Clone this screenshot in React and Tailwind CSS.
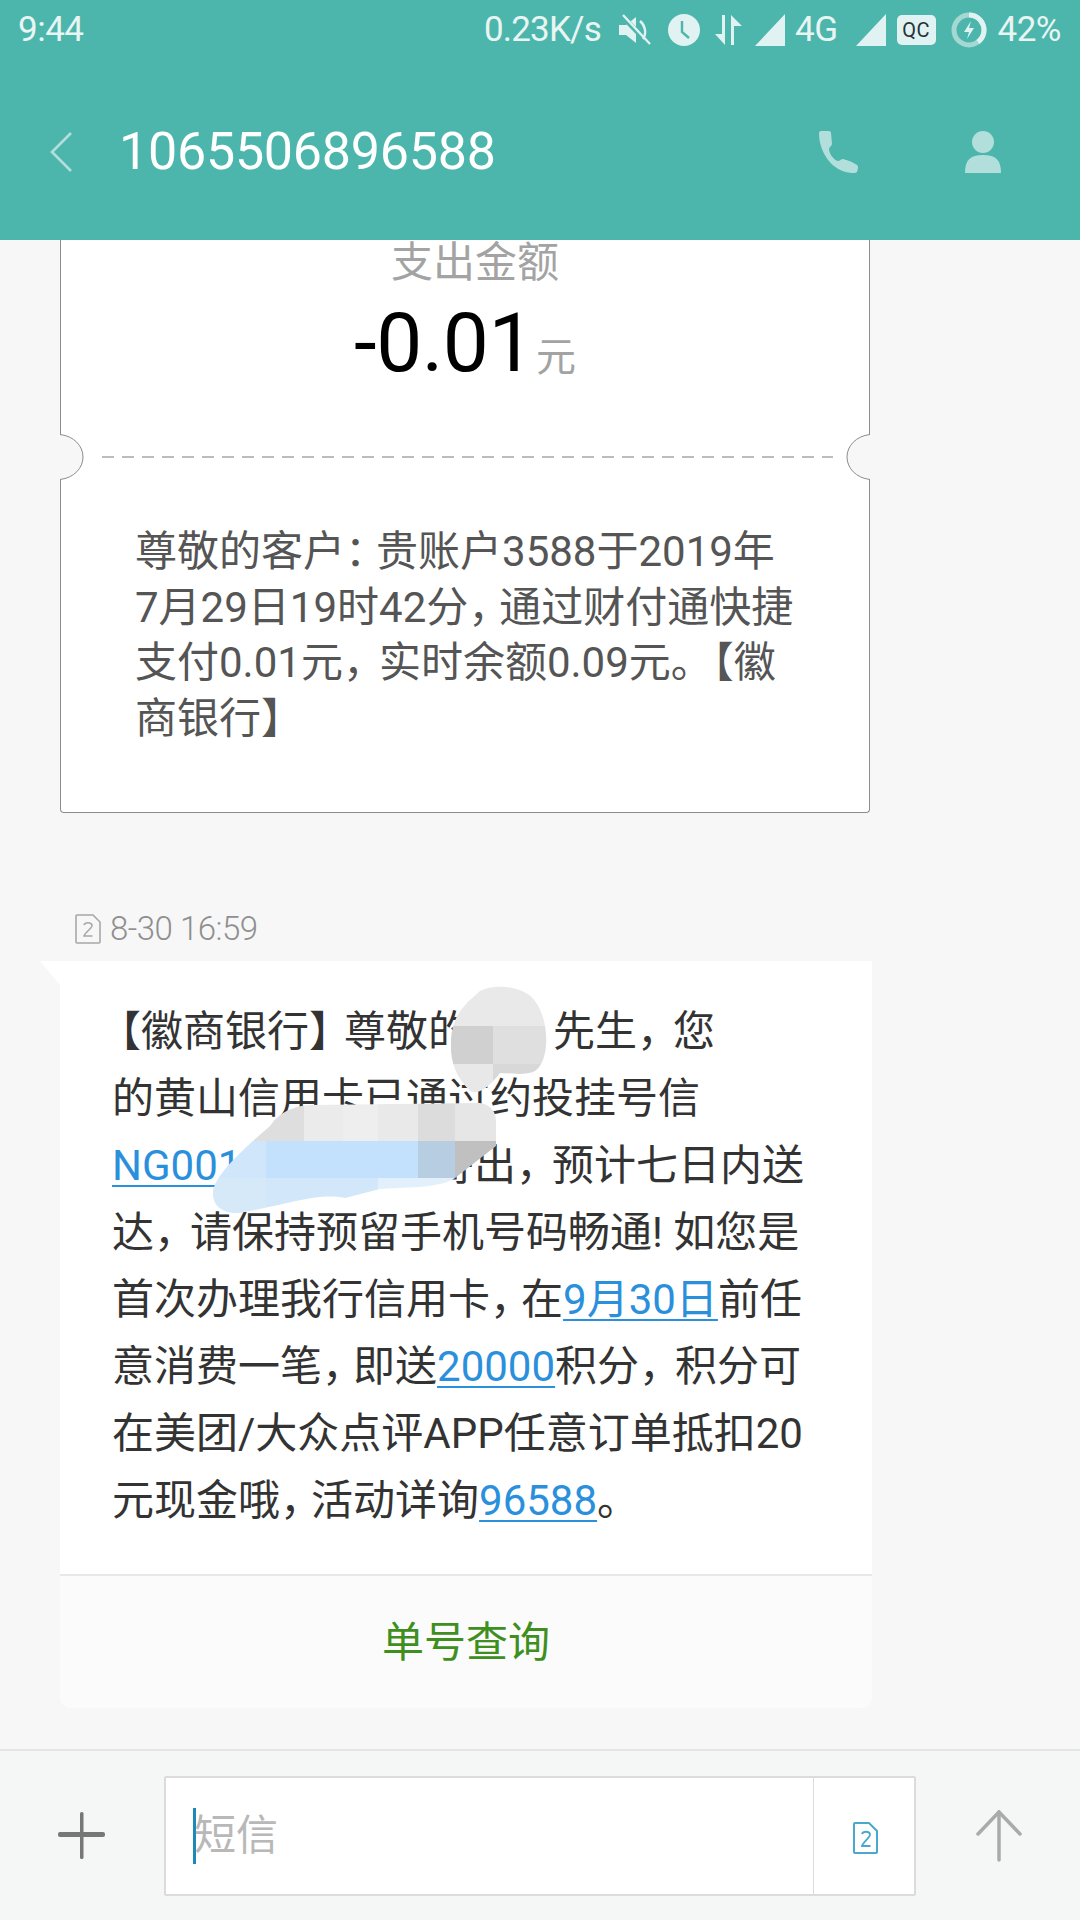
const smudgeCells = [
  // upper smudge
  { x: 445, y: 985, w: 110, h: 40, fill: '#e9e9e9', clip: 'a' },
  { x: 445, y: 1025, w: 48, h: 38, fill: '#d0d0d0', clip: 'a' },
  { x: 493, y: 1025, w: 62, h: 38, fill: '#dfdfdf', clip: 'a' },
  { x: 445, y: 1063, w: 48, h: 35, fill: '#e8e8e8', clip: 'a' },
  { x: 493, y: 1063, w: 62, h: 35, fill: '#d8d8d8', clip: 'a' },
  // lower smudge, grey row
  { x: 205, y: 1100, w: 99, h: 40, fill: '#dedede', clip: 'b' },
  { x: 304, y: 1100, w: 39, h: 40, fill: '#ebebeb', clip: 'b' },
  { x: 343, y: 1100, w: 35, h: 40, fill: '#eeeeee', clip: 'b' },
  { x: 378, y: 1100, w: 40, h: 40, fill: '#e9e9e9', clip: 'b' },
  { x: 418, y: 1100, w: 37, h: 40, fill: '#dcdcdc', clip: 'b' },
  { x: 455, y: 1100, w: 45, h: 40, fill: '#e6e6e6', clip: 'b' },
  // lower smudge, blue rows
  { x: 205, y: 1140, w: 61, h: 37, fill: '#cfe6fb', clip: 'b' },
  { x: 266, y: 1140, w: 152, h: 37, fill: '#c3e1fc', clip: 'b' },
  { x: 418, y: 1140, w: 37, h: 37, fill: '#b7cde2', clip: 'b' },
  { x: 455, y: 1140, w: 45, h: 37, fill: '#c0c0c0', clip: 'b' },
  { x: 205, y: 1177, w: 61, h: 38, fill: '#d6e9f9', clip: 'b' },
  { x: 266, y: 1177, w: 112, h: 38, fill: '#d2e7fa', clip: 'b' },
  { x: 378, y: 1177, w: 90, h: 38, fill: '#e2f0fb', clip: 'b' },
]

function Signal() {
  return (
    <svg width="30" height="32" viewBox="0 0 30 32" fill="#e0f2f1">
      <path d="M30 0V32H0Z" />
    </svg>
  )
}

function StatusBar() {
  return (
    <div className="flex h-[60px] items-center justify-between pl-[18px] pr-[19px] text-[35px] font-normal text-[#e8f5f3]">
      <span className="tracking-[-0.5px]">9:44</span>
      <div className="flex items-center">
        <span className="tracking-[-0.8px]">0.23K/s</span>
        {/* mute */}
        <svg className="ml-[18px]" width="32" height="32" viewBox="0 0 32 32" fill="#e0f2f1">
          <path d="M0 11h7l10-8v26l-10-8H0Z" />
          <path d="M3 2l27 28" stroke="#4db6ac" strokeWidth="5" />
          <path d="M4 1l27 29" stroke="#e0f2f1" strokeWidth="2.4" />
          <path d="M21 7c5 4 7 12 3 18" stroke="#e0f2f1" strokeWidth="2.4" fill="none" />
        </svg>
        {/* alarm */}
        <svg className="ml-[17px]" width="32" height="32" viewBox="0 0 32 32">
          <circle cx="16" cy="16" r="16" fill="#e0f2f1" />
          <path d="M14 7v11l7 6" fill="none" stroke="#4db6ac" strokeWidth="2.4" />
        </svg>
        {/* data arrows */}
        <svg className="ml-[14px]" width="28" height="30" viewBox="0 0 28 30" fill="#e0f2f1">
          <path d="M8 0h3v30L1 19h7Z" />
          <path d="M17 0l11 11h-8v19h-3Z" />
        </svg>
        <span className="ml-[13px]"><Signal /></span>
        <span className="ml-[10px] tracking-[-0.5px]">4G</span>
        <span className="ml-[18px]"><Signal /></span>
        <span className="ml-[11px] flex h-[30px] w-[39px] items-center justify-center rounded-[5px] bg-[#e0f2f1] text-[20px] font-normal tracking-[0.5px] text-[#263238]">
          QC
        </span>
        {/* battery ring */}
        <svg className="ml-[15px]" width="36" height="36" viewBox="0 0 36 36">
          <circle cx="18" cy="18" r="15" fill="none" stroke="#a6d8d3" strokeWidth="5" />
          <path d="M18 3a15 15 0 0 1 9 27" fill="none" stroke="#e0f2f1" strokeWidth="5" />
          <path d="M20 9l-7 11h5l-2 7 7-11h-5Z" fill="#e0f2f1" />
        </svg>
        <span className="ml-[11px] tracking-[-0.5px]">42%</span>
      </div>
    </div>
  )
}

function NavBar() {
  return (
    <div className="flex h-[180px] items-center pt-[4px]">
      <svg className="ml-[50px]" width="22" height="40" viewBox="0 0 22 40" fill="none" stroke="#b2dfdb" strokeWidth="2.6">
        <path d="M21 1L2 20l19 19" />
      </svg>
      <h1 className="ml-[47px] text-[52px] font-normal leading-none tracking-[-0.25px] text-white">1065506896588</h1>
      <svg className="ml-auto" width="42" height="42" viewBox="0 0 42 42" fill="#b2dfdb">
        <path d="M3 0h8c1.500 0 2 1 2 2l1 11c0 2-3 3-3 5 0 5 5 11 9 12 2 0 3-2 5-2 4 1 10 3 14 6 1 1 1 2 1 3l-1 4c-1 1-3 1-5 1C14 41 1 21 1 2c0-1 1-2 2-2Z" />
      </svg>
      <svg className="ml-[104px] mr-[78px]" width="38" height="42" viewBox="0 0 38 42" fill="#b2dfdb">
        <ellipse cx="19" cy="11" rx="11" ry="11" />
        <path d="M1 42c0-13 5-18 18-18s18 5 18 18Z" />
      </svg>
    </div>
  )
}

function Notch({ right }) {
  return (
    <svg
      className={right ? 'absolute right-[-1px] top-[194px] h-[46px] w-[24px] -scale-x-100' : 'absolute left-[-1px] top-[194px] h-[46px] w-[24px]'}
      viewBox="0 0 24 46"
    >
      <path d="M0 0.5C14 2 23 12 23 23S14 44 0 45.5Z" fill="#f7f7f7" />
      <path d="M0 0.5C14 2 23 12 23 23S14 44 0 45.5" fill="none" stroke="#8c8c8c" strokeWidth="1" />
    </svg>
  )
}

// the phone's font sets these marks narrower than a full em
function Mark({ children, loose }) {
  return <span className={loose ? 'tracking-[-6px]' : 'tracking-[-11px]'}>{children}</span>
}

function ReceiptCard() {
  return (
    <div className="relative ml-[60px] h-[573px] w-[810px] rounded-b-[4px] border border-t-0 border-[#8c8c8c] bg-white">
      <p className="pl-[20px] text-center text-[42px] leading-[46px] text-[#a3a3a3]">支出金额</p>
      <div className="mt-[12px] flex h-[90px] items-baseline justify-center">
        <span className="text-[82px] font-normal leading-[90px] tracking-[-0.5px] text-black">-0.01</span>
        <span className="ml-[2px] text-[40px] text-[#a3a3a3]">元</span>
      </div>
      <Notch />
      <Notch right />
      <div className="ml-[41px] mr-[36px] mt-[68px] h-[2px] bg-[repeating-linear-gradient(90deg,#bdbdbd_0,#bdbdbd_12px,transparent_12px,transparent_20px)]" />
      <div className="ml-[74px] mt-[66px] whitespace-nowrap text-[42px] leading-[55.5px] text-[#555]">
        <p>尊敬的客户<Mark>：</Mark>贵账户3588于2019年</p>
        <p>7月29日19时42分<Mark>，</Mark>通过财付通快捷</p>
        <p>支付0.01元<Mark loose>，</Mark>实时余额0.09元。【徽</p>
        <p>商银行】</p>
      </div>
    </div>
  )
}

function Link({ children }) {
  return <span className="text-[#2a90dc] underline decoration-2 underline-offset-[5px]">{children}</span>
}

function MessageBubble() {
  return (
    <div className="relative ml-[60px] mt-[14px] w-[812px] rounded-b-[12px] bg-white">
      <svg className="absolute left-[-20px] top-0" width="20" height="24" viewBox="0 0 20 24" fill="#fff">
        <path d="M0 0H20V24Z" />
      </svg>
      <div className="whitespace-nowrap pb-[40px] pl-[52px] pt-[37px] text-[42px] leading-[67px] text-[#333]">
        <p className="-ml-[13px]">【徽商银行<span className="tracking-[-7px]">】</span>尊敬的<span className="inline-block w-[83px]" />先生<Mark loose>，</Mark>您</p>
        <p>的黄山信用卡已通过约投挂号信</p>
        <p className="flex w-[692px] justify-between">
          <Link>NG001</Link>
          <span>寄出<Mark loose>，</Mark>预计七日内送</span>
        </p>
        <p>达<Mark loose>，</Mark>请保持预留手机号码畅通! 如您是</p>
        <p>首次办理我行信用卡<Mark>，</Mark>在<Link>9月30日</Link>前任</p>
        <p>意消费一笔<Mark>，</Mark>即送<Link>20000</Link>积分<Mark loose>，</Mark>积分可</p>
        <p>在美团/大众点评APP任意订单抵扣20</p>
        <p>元现金哦<Mark>，</Mark>活动详询<Link>96588</Link>。</p>
      </div>
      <div className="flex h-[134px] items-center justify-center rounded-b-[12px] border-t-2 border-[#e8e8e8] bg-[#fbfbfb] text-[42px] text-[#3f8f1f]">
        单号查询
      </div>
      {/* mosaic hiding the private details */}
      <svg className="absolute left-0 top-0" width="560" height="270" viewBox="60 960 560 270">
        <defs>
          <clipPath id="a">
            <path d="M451 1040C452 1010 470 1000 480 990C495 982 525 985 535 1000C550 1020 550 1060 535 1070C525 1075 510 1072 500 1072C490 1085 478 1095 470 1090C455 1075 450 1060 451 1040Z" />
          </clipPath>
          <clipPath id="b">
            <path d="M270 1125C280 1110 295 1105 310 1104L480 1102C492 1104 496 1112 496 1120V1145L455 1177C440 1188 400 1186 380 1188L345 1197C320 1192 300 1200 240 1212C222 1213 212 1205 213 1190C216 1175 235 1155 270 1125Z" />
          </clipPath>
        </defs>
        {smudgeCells.map((c) => (
          <rect key={`${c.x}-${c.y}`} x={c.x} y={c.y} width={c.w} height={c.h} fill={c.fill} clipPath={`url(#${c.clip})`} />
        ))}
      </svg>
    </div>
  )
}

function Composer() {
  return (
    <div className="flex h-[171px] items-center border-t-2 border-[#e4e6e6] bg-[#f5f7f7]">
      <svg className="ml-[58px]" width="47" height="47" viewBox="0 0 47 47" fill="#777">
        <rect x="22" y="0" width="3.5" height="47" rx="1.5" />
        <rect x="0" y="20" width="47" height="5" rx="2" />
      </svg>
      <div className="ml-[59px] flex h-[120px] w-[752px] rounded-[2px] border-2 border-[#dcdcdc] bg-white">
        <div className="flex flex-1 items-center pl-[27px]">
          <span className="h-[56px] w-[3px] bg-[#1e88b8]" />
          <span className="-ml-[2px] text-[42px] text-[#b8b8b8]">短信</span>
        </div>
        <div className="flex w-[101px] items-center justify-center border-l border-[#dcdcdc] pl-[4px]">
          <svg className="mt-[4px]" width="26" height="32" viewBox="0 0 26 32" fill="none" stroke="#4aa8cc" strokeWidth="2">
            <path d="M2 1h14l8 8v21a1 1 0 0 1-1 1H2a1 1 0 0 1-1-1V2a1 1 0 0 1 1-1Z" />
            <path d="M9 12c1-3 7-3 8 0 1 3-7 8-8 12h8.500" strokeWidth="1.800" />
          </svg>
        </div>
      </div>
      <svg className="ml-[60px]" width="46" height="52" viewBox="0 0 46 52" fill="none" stroke="#aaa" strokeLinecap="round" strokeWidth="3.500">
        <path d="M23 2V50" />
        <path d="M2 24L23 2l21 22" />
      </svg>
    </div>
  )
}

export default function App() {
  return (
    <div className="flex h-[1920px] w-[1080px] flex-col overflow-hidden bg-[#f7f7f7] font-['Roboto','Noto_Sans_CJK_SC',sans-serif]">
      <header className="h-[240px] shrink-0 bg-[#4db6ac]">
        <StatusBar />
        <NavBar />
      </header>
      <main className="min-h-0 flex-1">
        <ReceiptCard />
        {/* timestamp */}
        <div className="ml-[75px] mt-[98px] flex h-[36px] items-center text-[33px] font-light text-[#8f8f8f]">
          <svg width="26" height="30" viewBox="0 0 26 30" fill="none" stroke="#a8a8a8" strokeWidth="1.600">
            <path d="M2 1h16l7 7v20a1 1 0 0 1-1 1H2a1 1 0 0 1-1-1V2a1 1 0 0 1 1-1Z" />
            <path d="M9 11c1-3 7-3 8 0 1 3-7 7-8 11h8.500" />
          </svg>
          <span className="ml-[9px] tracking-[-0.5px]">8-30 16:59</span>
        </div>
        <MessageBubble />
      </main>
      <Composer />
    </div>
  )
}
